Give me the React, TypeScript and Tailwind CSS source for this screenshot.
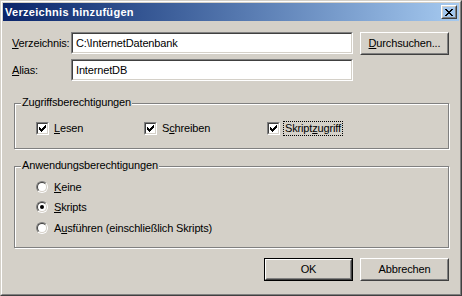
import React from "react";

function Mn({ children }: { children: React.ReactNode }) {
  return <span className="underline underline-offset-[1px]">{children}</span>;
}

function Sunken({ children, className = "" }: { children?: React.ReactNode; className?: string }) {
  return (
    <div className={`border border-t-[#808080] border-l-[#808080] border-r-white border-b-white ${className}`}>
      <div className="h-full border border-t-[#404040] border-l-[#404040] border-r-[#d4d0c8] border-b-[#d4d0c8] bg-white">
        {children}
      </div>
    </div>
  );
}

function Button({
  children,
  className = "",
  isDefault = false,
}: {
  children: React.ReactNode;
  className?: string;
  isDefault?: boolean;
}) {
  if (isDefault) {
    return (
      <div className={`border border-black ${className}`}>
        <div className="h-full border border-t-white border-l-white border-r-[#404040] border-b-[#404040]">
          <div className="flex h-full items-center justify-center border border-t-[#d4d0c8] border-l-[#d4d0c8] border-r-[#808080] border-b-[#808080]">
            {children}
          </div>
        </div>
      </div>
    );
  }
  return (
    <div className={`border border-t-white border-l-white border-r-[#404040] border-b-[#404040] ${className}`}>
      <div className="flex h-full items-center justify-center border border-t-[#d4d0c8] border-l-[#d4d0c8] border-r-[#808080] border-b-[#808080]">
        {children}
      </div>
    </div>
  );
}

function Checkbox() {
  // classic 13x13 sunken box with a 7x7 tick
  const tick: [number, number, number][] = [
    [6, 0, 1],
    [5, 1, 2],
    [0, 2, 1],
    [4, 2, 3],
    [0, 3, 2],
    [3, 3, 3],
    [0, 4, 5],
    [1, 5, 3],
    [2, 6, 1],
  ];
  return (
    <Sunken className="h-[13px] w-[13px] shrink-0">
      <svg width="9" height="9" viewBox="0 0 9 9" shapeRendering="crispEdges" className="block">
        {tick.map(([x, y, w], i) => (
          <rect key={i} x={x + 1} y={y + 1} width={w} height={1} fill="#000" />
        ))}
      </svg>
    </Sunken>
  );
}

function Radio({ checked = false }: { checked?: boolean }) {
  return (
    <div className="h-[12px] w-[12px] shrink-0 rounded-full border border-t-[#808080] border-l-[#808080] border-r-white border-b-white">
      <div className="flex h-full items-center justify-center rounded-full border border-t-[#404040] border-l-[#404040] border-r-[#d4d0c8] border-b-[#d4d0c8] bg-white">
        {checked && <div className="h-[4px] w-[4px] rounded-full bg-black" />}
      </div>
    </div>
  );
}

function Group({ title, className = "", children }: { title: string; className?: string; children: React.ReactNode }) {
  return (
    <div
      className={`relative ml-[2px] w-[435px] border border-[#808080] shadow-[inset_1px_1px_0_#ffffff,1px_1px_0_#ffffff] ${className}`}
    >
      <div className="absolute left-[6px] top-[-8px] bg-[#d4d0c8] px-px leading-[13px]">{title}</div>
      {children}
    </div>
  );
}

export default function App() {
  return (
    <div className="h-[296px] w-[462px] border border-t-[#d4d0c8] border-l-[#d4d0c8] border-r-[#404040] border-b-[#404040] bg-[#d4d0c8] font-['Liberation_Sans',Arial,sans-serif] text-[11px] leading-[13px] tracking-[-0.15px] text-black">
      <div className="flex h-full flex-col border border-t-white border-l-white border-r-[#808080] border-b-[#808080] p-px">
        {/* Title bar */}
        <div className="flex h-[18px] items-center justify-between bg-gradient-to-r from-[#0a246a] to-[#a6caf0] pl-[2px] pr-[2px]">
          <span className="text-[11px] font-bold tracking-[0.3px] text-white">Verzeichnis hinzufügen</span>
          <Button className="h-[14px] w-[16px]">
            <svg width="8" height="7" viewBox="0 0 8 7" shapeRendering="crispEdges" className="block">
              <path d="M0 0h2v1h-2zM6 0h2v1h-2zM1 1h2v1h-2zM5 1h2v1h-2zM2 2h4v1h-4zM3 3h2v1h-2zM2 4h4v1h-4zM1 5h2v1h-2zM5 5h2v1h-2zM0 6h2v1h-2zM6 6h2v1h-2z" fill="#000" />
            </svg>
          </Button>
        </div>

        {/* Body */}
        <div className="flex flex-1 flex-col pl-[9px] pr-[10px]">
          <div className="mt-[11px] flex h-[23px] items-start">
            <div className="flex h-[22px] w-[59px] items-center">
              <span>
                <Mn>V</Mn>erzeichnis:
              </span>
            </div>
            <Sunken className="h-[22px] w-[282px]">
              <div className="flex h-full items-center pl-[3px]">{"C:\\InternetDatenbank"}</div>
            </Sunken>
            <Button className="ml-[7px] h-[23px] w-[89px]">
              <span>
                <Mn>D</Mn>urchsuchen...
              </span>
            </Button>
          </div>

          <div className="mt-[4px] flex h-[22px] items-center">
            <div className="w-[59px]">
              <Mn>A</Mn>lias:
            </div>
            <Sunken className="h-[22px] w-[282px]">
              <div className="flex h-full items-center pl-[3px]">InternetDB</div>
            </Sunken>
          </div>

          <Group title="Zugriffsberechtigungen" className="mt-[22px] h-[46px]">
            <div className="flex pl-[21px] pt-[17px]">
              <div className="flex w-[108px] items-center">
                <Checkbox />
                <span className="ml-[5px]">
                  <Mn>L</Mn>esen
                </span>
              </div>
              <div className="flex w-[123px] items-center">
                <Checkbox />
                <span className="ml-[5px]">
                  S<Mn>c</Mn>hreiben
                </span>
              </div>
              <div className="flex items-center">
                <Checkbox />
                <span className="ml-[3px] border border-dotted border-black px-px">
                  Skript<Mn>z</Mn>ugriff
                </span>
              </div>
            </div>
          </Group>

          <Group title="Anwendungsberechtigungen" className="mt-[17px] h-[82px]">
            <div className="flex flex-col pl-[21px] pt-[10px]">
              <div className="flex h-[20px] items-center">
                <Radio />
                <span className="ml-[6px]">
                  <Mn>K</Mn>eine
                </span>
              </div>
              <div className="flex h-[20px] items-center">
                <Radio checked />
                <span className="ml-[6px]">
                  <Mn>S</Mn>kripts
                </span>
              </div>
              <div className="mt-px flex h-[20px] items-center">
                <Radio />
                <span className="ml-[6px]">
                  A<Mn>u</Mn>sführen (einschließlich Skripts)
                </span>
              </div>
            </div>
          </Group>

          <div className="mt-[10px] flex justify-end gap-[7px]">
            <Button isDefault className="h-[23px] w-[89px]">
              OK
            </Button>
            <Button className="h-[23px] w-[89px]">Abbrechen</Button>
          </div>
        </div>
      </div>
    </div>
  );
}
